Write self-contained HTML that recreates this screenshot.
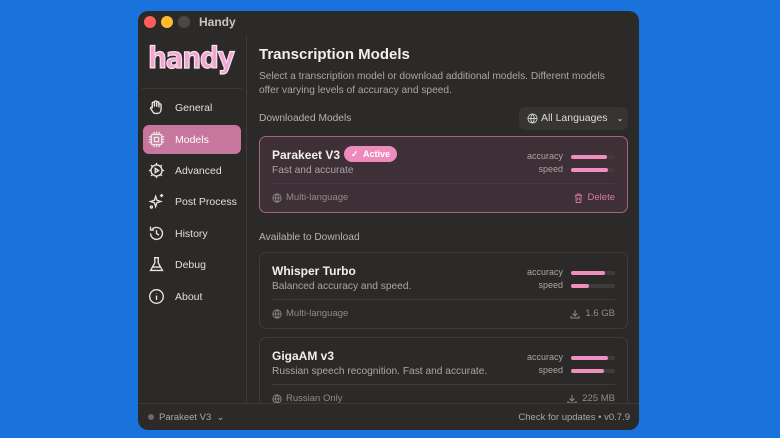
<!DOCTYPE html><html><head><style>
*{box-sizing:border-box;margin:0;padding:0}
body{width:780px;height:438px;background:#1a72dc;font-family:"Liberation Sans",sans-serif;position:relative;overflow:hidden}
.win{position:absolute;left:138px;top:11px;width:501px;height:419px;background:#2c2a28;border-radius:10px;overflow:hidden}
.dot{position:absolute;top:5px;width:12px;height:12px;border-radius:50%}
.title{position:absolute;left:61px;top:4px;color:#c8c6c4;font-size:12px;font-weight:bold}
.side{position:absolute;left:0;top:24px;width:109px;height:368px;border-right:1px solid #3c3a38}
.logo{position:absolute;left:10px;top:6px;font-size:29px;font-weight:bold;color:#f1a7cf;-webkit-text-stroke:1.2px #fbe0ef;letter-spacing:-1.5px;font-family:"DejaVu Sans",sans-serif;transform:scaleX(0.92);transform-origin:left}
.hr{position:absolute;left:4px;top:53px;width:100px;height:1px;background:#3c3a38}
.nav{position:absolute;left:5px;width:98px;height:29px;border-radius:6px;color:#e0dedc;font-size:10.5px;display:flex;align-items:center;padding-left:5px;white-space:nowrap}
.nav svg{width:17px;height:17px;margin-right:10px;fill:none;stroke:#e8e6e4;stroke-width:1.6;flex:none}
.nav.act{background:#c7779d;color:#fff}
.main{position:absolute;left:110px;top:24px;width:391px;height:368px;overflow:hidden}
h1{position:absolute;left:11px;top:11px;font-size:15px;color:#f2f0ee;font-weight:bold}
.desc{position:absolute;left:11px;top:35px;width:355px;font-size:10.2px;line-height:14px;color:#a9a7a5}
.lab{position:absolute;left:11px;font-size:10.2px;color:#b5b3b1}
.sel{position:absolute;left:271px;top:72px;width:109px;height:23px;background:#373533;border-radius:6px;color:#dddbd9;font-size:10.5px;padding:5px 0 0 22px}
.card{position:absolute;left:11px;width:369px;height:77px;border:1px solid #3e3c3a;border-radius:7px}
.card.a{background:#3f2f36;border:1.5px solid #a36480}
.nm{position:absolute;left:12px;top:11px;font-size:12px;font-weight:bold;color:#f2f0ee}
.sb{position:absolute;left:12px;top:28px;font-size:10.2px;color:#a9a7a5}
.line{position:absolute;left:12px;right:12px;top:46px;height:1px;background:#403e3c}
.ft{position:absolute;left:12px;top:55px;font-size:9.5px;color:#8e8c8a;display:flex;align-items:center;gap:4px}
.fr{position:absolute;right:12px;top:55px;font-size:9.5px;color:#8e8c8a;display:flex;align-items:center;gap:5px}
.m{position:absolute;right:64px;font-size:9px;color:#a9a7a5;text-align:right}
.bar{position:absolute;right:12px;width:44px;height:4px;border-radius:2px;background:#3e3c3a}
.bar i{display:block;height:4px;border-radius:2px;background:#f08ec0}
.badge{position:absolute;left:84px;top:9px;width:53px;height:16px;border-radius:8px;background:#ee8bbd;color:#fff;font-size:9px;font-weight:bold;padding:3px 0 0 19px}
.foot{position:absolute;left:0;top:392px;width:501px;height:27px;border-top:1px solid #3c3a38;font-size:9.5px;color:#a9a7a5}
</style></head><body>
<div class="win">
<div class="dot" style="left:6px;background:#fe5f57"></div>
<div class="dot" style="left:23px;background:#febc2e"></div>
<div class="dot" style="left:40px;background:#4a4846"></div>
<div class="title">Handy</div>
<div class="side">
<div class="logo">handy</div>
<div class="hr"></div>
<div class="nav" style="top:58px"><svg viewBox="0 0 20 20"><path d="M5 11V5a1.3 1.3 0 0 1 2.6 0v4V3.5a1.3 1.3 0 0 1 2.6 0V9V4.5a1.3 1.3 0 0 1 2.6 0V10V7a1.3 1.3 0 0 1 2.6 0v5c0 3-2 5-5 5H9c-2 0-3-1-4-3L3 11a1.2 1.2 0 0 1 2-1"/></svg>General</div>
<div class="nav act" style="top:90px"><svg viewBox="0 0 20 20"><rect x="4" y="4" width="12" height="12" rx="1.5"/><rect x="7.5" y="7.5" width="5" height="5"/><path d="M7 1v3M10 1v3M13 1v3M7 16v3M10 16v3M13 16v3M1 7h3M1 10h3M1 13h3M16 7h3M16 10h3M16 13h3"/></svg>Models</div>
<div class="nav" style="top:121px"><svg viewBox="0 0 20 20"><circle cx="10" cy="10" r="6.5"/><path d="M10 1v2.5M10 16.5V19M1 10h2.5M16.5 10H19M3.6 3.6l1.8 1.8M14.6 14.6l1.8 1.8M3.6 16.4l1.8-1.8M14.6 5.4l1.8-1.8M8.5 7.5l4 2.5-4 2.5z"/></svg>Advanced</div>
<div class="nav" style="top:152px"><svg viewBox="0 0 20 20"><path d="M9 4l1.5 4.5L15 10l-4.5 1.5L9 16l-1.5-4.5L3 10l4.5-1.5zM16 1v4M14 3h4"/><circle cx="4" cy="16.5" r="1.2"/></svg>Post Process</div>
<div class="nav" style="top:184px"><svg viewBox="0 0 20 20"><path d="M3 10a7 7 0 1 0 2-5M3 2v4h4M10 6v4l3 2"/></svg>History</div>
<div class="nav" style="top:215px"><svg viewBox="0 0 20 20"><path d="M7 2h6M8 2v6l-5 9h14l-5-9V2M5 13h10"/></svg>Debug</div>
<div class="nav" style="top:247px"><svg viewBox="0 0 20 20"><circle cx="10" cy="10" r="8"/><path d="M10 9v5M10 6v.5"/></svg>About</div>
</div>
<div class="main">
<h1>Transcription Models</h1>
<div class="desc">Select a transcription model or download additional models. Different models offer varying levels of accuracy and speed.</div>
<div class="lab" style="top:78px">Downloaded Models</div>
<div class="sel"><svg style="position:absolute;left:8px;top:6px" width="11" height="11" viewBox="0 0 12 12" fill="none" stroke="#ccc" stroke-width="1"><circle cx="6" cy="6" r="5"/><path d="M1 6h10M6 1c-2.5 3-2.5 7 0 10M6 1c2.5 3 2.5 7 0 10"/></svg>All Languages <span style="margin-left:6px;font-size:8px">⌄</span></div>
<div class="card a" style="top:101px">
<div class="nm">Parakeet V3</div><div class="badge"><span style="position:absolute;left:7px;top:3px">✓</span>Active</div>
<div class="sb">Fast and accurate</div>
<div class="m" style="top:14px">accuracy</div><div class="bar" style="top:18px"><i style="width:36px"></i></div>
<div class="m" style="top:27px">speed</div><div class="bar" style="top:31px"><i style="width:37px"></i></div>
<div class="line"></div>
<div class="ft"><svg width="10" height="10" viewBox="0 0 12 12" fill="none" stroke="#8e8c8a" stroke-width="1"><circle cx="6" cy="6" r="5"/><path d="M1 6h10M6 1c-2.5 3-2.5 7 0 10M6 1c2.5 3 2.5 7 0 10"/></svg>Multi-language</div>
<div class="fr" style="color:#d77aa6"><svg width="9" height="10" viewBox="0 0 10 11" fill="none" stroke="#d77aa6" stroke-width="1"><path d="M1 2.5h8M3.5 2.5V1h3v1.5M2 2.5l.5 8h5l.5-8M4 5v3M6 5v3"/></svg>Delete</div>
</div>
<div class="lab" style="top:197px">Available to Download</div>
<div class="card" style="top:217px">
<div class="nm">Whisper Turbo</div>
<div class="sb">Balanced accuracy and speed.</div>
<div class="m" style="top:14px">accuracy</div><div class="bar" style="top:18px"><i style="width:34px"></i></div>
<div class="m" style="top:27px">speed</div><div class="bar" style="top:31px"><i style="width:18px"></i></div>
<div class="line"></div>
<div class="ft"><svg width="10" height="10" viewBox="0 0 12 12" fill="none" stroke="#8e8c8a" stroke-width="1"><circle cx="6" cy="6" r="5"/><path d="M1 6h10M6 1c-2.5 3-2.5 7 0 10M6 1c2.5 3 2.5 7 0 10"/></svg>Multi-language</div>
<div class="fr"><svg width="10" height="10" viewBox="0 0 10 10" fill="none" stroke="#8e8c8a" stroke-width="1"><path d="M5 1v6M2.5 4.5L5 7l2.5-2.5M1 7v2h8V7"/></svg>1.6 GB</div>
</div>
<div class="card" style="top:302px">
<div class="nm">GigaAM v3</div>
<div class="sb">Russian speech recognition. Fast and accurate.</div>
<div class="m" style="top:14px">accuracy</div><div class="bar" style="top:18px"><i style="width:37px"></i></div>
<div class="m" style="top:27px">speed</div><div class="bar" style="top:31px"><i style="width:33px"></i></div>
<div class="line"></div>
<div class="ft"><svg width="10" height="10" viewBox="0 0 12 12" fill="none" stroke="#8e8c8a" stroke-width="1"><circle cx="6" cy="6" r="5"/><path d="M1 6h10M6 1c-2.5 3-2.5 7 0 10M6 1c2.5 3 2.5 7 0 10"/></svg>Russian Only</div>
<div class="fr"><svg width="10" height="10" viewBox="0 0 10 10" fill="none" stroke="#8e8c8a" stroke-width="1"><path d="M5 1v6M2.5 4.5L5 7l2.5-2.5M1 7v2h8V7"/></svg>225 MB</div>
</div>
</div>
<div class="foot">
<span style="position:absolute;left:10px;top:10px;width:6px;height:6px;border-radius:50%;background:#6b6967"></span>
<span style="position:absolute;left:21px;top:8px">Parakeet V3 &nbsp;⌄</span>
<span style="position:absolute;right:9px;top:8px">Check for updates • v0.7.9</span>
</div>
</div>
</body></html>
